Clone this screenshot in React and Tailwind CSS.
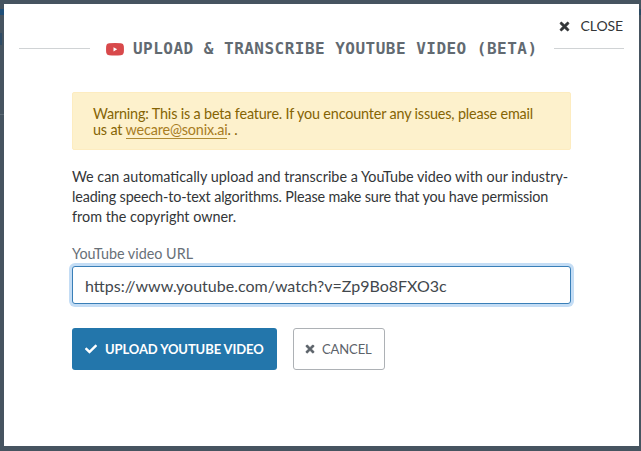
import React from "react";
import { FaTimes, FaCheck } from "react-icons/fa";

function YoutubeIcon() {
  return (
    <svg width="18" height="13" viewBox="0 0 18 13" className="relative top-px shrink-0">
      <path d="M3 .3Q9-.2 15 .3Q17.6.4 17.8 3Q18.1 6.500 17.8 9.600Q17.500 12.100 15 12.300Q9 12.800 3 12.300Q.5 12.100.2 9.600Q-.1 6.500.2 3Q.4.4 3 .3Z" fill="#d8494b" />
      <path d="M7.500 4.200L11.200 6.300L7.500 8.400Z" fill="#fff" />
    </svg>
  );
}

/* Slivers of the dimmed page that show around the dialog. */
function Backdrop() {
  return (
    <>
      <div className="absolute top-[9px] left-0 h-[6px] w-1 bg-[#1f4f78]" />
      <div className="absolute top-[33px] left-0 h-[12px] w-[2px] bg-[#2f4c66]" />
      <div className="absolute top-[114px] left-0 h-px w-1 bg-[#5d6a75]" />
      <div className="absolute top-[9px] right-0 h-[6px] w-[2px] bg-[#2b4a63]" />
    </>
  );
}

export default function App() {
  return (
    <div className="relative h-[451px] w-[641px] overflow-hidden bg-[#465460] pt-1 pl-1 font-['Lato',sans-serif]">
      <Backdrop />
      <div className="h-[442px] w-[635px] bg-white px-[15px]">
        <div className="flex h-[44px] items-center justify-end pr-[1px]">
          <button className="flex items-center text-[14px] leading-5 text-[#333638]">
            <FaTimes className="mr-[10px] size-[13px]" stroke="currentColor" strokeWidth="24" />
            <span className="tracking-[-0.1px]">CLOSE</span>
          </button>
        </div>
        <div className="flex h-0 items-center">
          <div className="h-px w-[71px] shrink-0 bg-[#d0d3d5]" />
          <h1 className="flex flex-1 items-center pl-[16px] whitespace-nowrap">
            <YoutubeIcon />
            <span className="relative top-px ml-[9px] font-['DejaVu_Sans_Mono',monospace] text-[16px] leading-5 font-bold tracking-[0.48px] text-[#626a71]">
              UPLOAD &amp; TRANSCRIBE YOUTUBE VIDEO (BETA)
            </span>
          </h1>
          <div className="h-px w-[70px] shrink-0 bg-[#d0d3d5]" />
        </div>
        <main className="mt-[44px] ml-[53px] w-[499px]">
          <div className="h-[58px] rounded-[2px] border border-[#fdecc0] bg-[#fdf1cc] px-5 pt-[13px] text-[14.4px] leading-4 tracking-[-0.17px] whitespace-nowrap text-[#856404]">
            <p>Warning: This is a beta feature. If you encounter any issues, please email</p>
            <p>us at <a className="border-b border-[#b08a30] text-[#a87c1f]">wecare@sonix.ai</a>. .</p>
          </div>
          <div className="mt-[17px] text-[14.38px] leading-5 whitespace-nowrap text-[#333638]">
            <p>We can automatically upload and transcribe a YouTube video with our industry-</p>
            <p className="tracking-[-0.155px]">leading speech-to-text algorithms. Please make sure that you have permission</p>
            <p>from the copyright owner.</p>
          </div>
          <label className="mt-[17px] block text-[14.35px] leading-5 text-[#687078]">YouTube video URL</label>
          <div className="mt-[2px] flex h-[38px] items-center rounded-[3px] border border-[#397fb8] bg-white px-3 text-[16px] text-[#42474c] shadow-[0_0_0_3px_#c4ddf5]">
            <span className="relative top-px">https://www.youtube.com/watch?v=Zp9Bo8FXO3c</span>
          </div>
          <div className="mt-6 flex gap-4">
            <button className="flex h-[42px] w-[205px] items-center rounded-[3px] bg-[#2376ab] pl-[13px] text-[13px] font-bold whitespace-nowrap text-white">
              <FaCheck className="mr-2 size-[12px]" />
              <span className="relative top-px tracking-[-0.1px]">UPLOAD YOUTUBE VIDEO</span>
            </button>
            <button className="flex h-[42px] w-[92px] items-center rounded-[3px] border border-[#adb1b5] pl-[10px] text-[13px] whitespace-nowrap text-[#5c636a]">
              <FaTimes className="mr-[6px] size-[12px]" stroke="currentColor" strokeWidth="20" />
              <span className="relative top-px tracking-[-0.1px]">CANCEL</span>
            </button>
          </div>
        </main>
      </div>
    </div>
  );
}
